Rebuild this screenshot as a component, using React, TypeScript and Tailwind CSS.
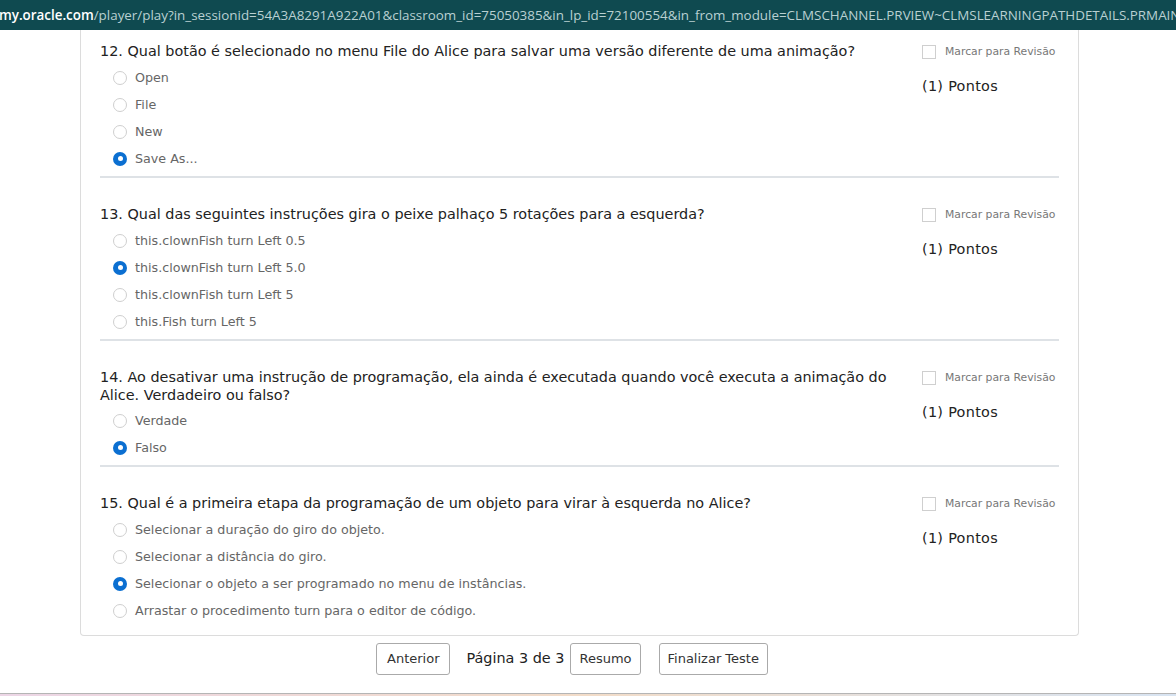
import React from "react";

type Q = {
  n: number;
  text: string;
  options: string[];
  selected: number;
};

const questions: Q[] = [
  {
    n: 12,
    text: "12. Qual botão é selecionado no menu File do Alice para salvar uma versão diferente de uma animação?",
    options: ["Open", "File", "New", "Save As..."],
    selected: 3,
  },
  {
    n: 13,
    text: "13. Qual das seguintes instruções gira o peixe palhaço 5 rotações para a esquerda?",
    options: [
      "this.clownFish turn Left 0.5",
      "this.clownFish turn Left 5.0",
      "this.clownFish turn Left 5",
      "this.Fish turn Left 5",
    ],
    selected: 1,
  },
  {
    n: 14,
    text: "14. Ao desativar uma instrução de programação, ela ainda é executada quando você executa a animação do Alice. Verdadeiro ou falso?",
    options: ["Verdade", "Falso"],
    selected: 1,
  },
  {
    n: 15,
    text: "15. Qual é a primeira etapa da programação de um objeto para virar à esquerda no Alice?",
    options: [
      "Selecionar a duração do giro do objeto.",
      "Selecionar a distância do giro.",
      "Selecionar o objeto a ser programado no menu de instâncias.",
      "Arrastar o procedimento turn para o editor de código.",
    ],
    selected: 2,
  },
];

function Radio({ checked }: { checked: boolean }) {
  if (checked) {
    return (
      <span className="w-[14px] h-[14px] rounded-full bg-[#0b6fd1] flex items-center justify-center shrink-0">
        <span className="w-[5px] h-[5px] rounded-full bg-white" />
      </span>
    );
  }
  return <span className="w-[14px] h-[14px] rounded-full border border-[#cfcfcf] bg-white shrink-0" />;
}

function Question({ q, first, last }: { q: Q; first: boolean; last: boolean }) {
  return (
    <div className={`${first ? "pt-[12px]" : "pt-[27px]"} ${last ? "pb-[11px]" : "pb-[4px] border-b-2 border-[#dee2e6]"}`}>
      <div className="flex">
        <div className="flex-1 pr-[30px]">
          <div className="text-[14.4px] leading-[18px] text-[#222]">{q.text}</div>
          <div className={`${q.n === 14 ? "mt-[3px]" : "mt-[4px]"} pl-[13px]`}>
            {q.options.map((o, i) => (
              <div key={i} className="h-[27px] flex items-center gap-[8px]">
                <Radio checked={i === q.selected} />
                <span className="text-[12.7px] text-[#666]">{o}</span>
              </div>
            ))}
          </div>
        </div>
        <div className="w-[137px] shrink-0">
          <div className="flex items-center h-[18px] mt-[1px]">
            <span className="w-[14px] h-[14px] border border-[#cfcfcf] bg-white shrink-0" />
            <span className="ml-[9px] text-[10.8px] text-[#777] whitespace-nowrap">Marcar para Revisão</span>
          </div>
          <div className="mt-[16px] text-[14.4px] tracking-[0.3px] text-[#222] leading-[18px]">(1) Pontos</div>
        </div>
      </div>
    </div>
  );
}

export default function App() {
  return (
    <div
      className="w-[1176px] h-[696px] bg-white flex flex-col overflow-hidden"
      style={{ fontFamily: '"DejaVu Sans", Verdana, sans-serif' }}
    >
      <div
        className="h-[30px] bg-[#0f4a50] flex items-center whitespace-nowrap overflow-hidden text-[13.4px] shrink-0"
        style={{ fontFamily: '"Open Sans", "Noto Sans", sans-serif' }}
      >
        <span className="text-white font-semibold -ml-[1px]">my.oracle.com</span>
        <span className="text-[#b9d0d2]">
          /player/play?in_sessionid=54A3A8291A922A01&amp;classroom_id=75050385&amp;in_lp_id=72100554&amp;in_from_module=CLMSCHANNEL.PRVIEW~CLMSLEARNINGPATHDETAILS.PRMAIN
        </span>
      </div>
      <div className="ml-[80px] w-[999px] border-x border-b border-[#dcdcdc] rounded-b-[4px] pl-[19px] pr-[19px] shrink-0">
        {questions.map((q, i) => (
          <Question key={q.n} q={q} first={i === 0} last={i === questions.length - 1} />
        ))}
      </div>
      <div className="mt-[7px] ml-[376px] flex items-center shrink-0">
        <button className="h-[32px] px-[10px] border border-[#aaa] rounded-[3px] bg-white text-[13px] text-[#333]">
          Anterior
        </button>
        <span className="ml-[16px] text-[14.4px] text-[#222]">Página 3 de 3</span>
        <button className="ml-[6px] h-[32px] px-[8px] border border-[#aaa] rounded-[3px] bg-white text-[13px] text-[#333]">
          Resumo
        </button>
        <button className="ml-[18px] h-[32px] px-[8px] border border-[#aaa] rounded-[3px] bg-white text-[13px] text-[#333]">
          Finalizar Teste
        </button>
      </div>
      <div className="flex-1" />
      <div className="h-[1px] bg-[#b5b5b5] shrink-0" />
      <div className="h-[2px] shrink-0 bg-gradient-to-r from-[#ecd6e6] via-[#f2dcc8] to-[#d8e4f2]" />
    </div>
  );
}
